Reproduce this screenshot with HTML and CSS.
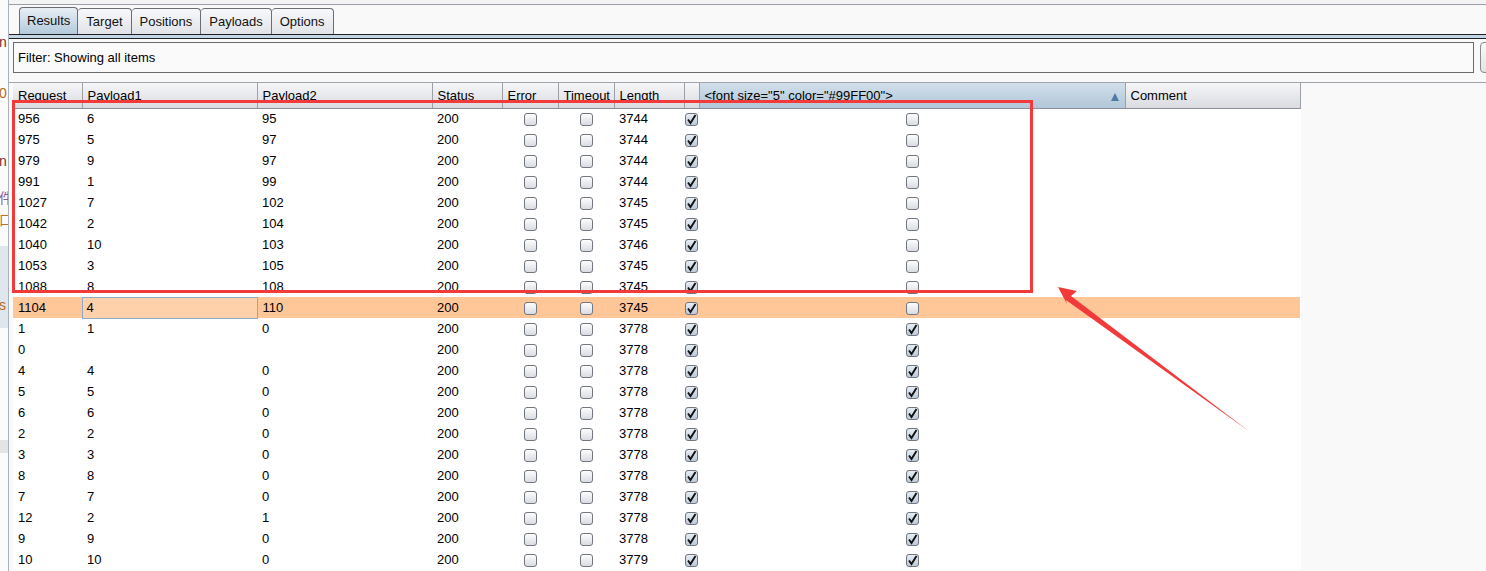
FILE: index.html
```html
<!DOCTYPE html>
<html lang="en">
<head>
  <meta charset="UTF-8">
  <title>Intruder Results</title>
  <link rel="stylesheet" href="styles.css">
</head>
<body>
  <div class="window">
    <aside class="behind">
      <span class="frag f1">n</span>
      <span class="frag f2">0,</span>
      <span class="frag f3">n</span>
      <span class="frag f4">件</span>
      <span class="frag f5">口</span>
      <span class="band"></span>
      <span class="frag f6">s</span>
      <span class="band gray"></span>
    </aside>

    <main class="panel">
      <div class="topline"></div>
      <nav class="tabs">
        <div class="tab active">Results</div>
        <div class="tab">Target</div>
        <div class="tab">Positions</div>
        <div class="tab">Payloads</div>
        <div class="tab">Options</div>
      </nav>
      <div class="tabrule"></div>

      <div class="filter-row">
        <div class="filter">Filter: Showing all items</div>
        <div class="filter-btn"></div>
      </div>
      <div class="sep"></div>

      <table class="results">
        <colgroup>
          <col style="width:69px"><col style="width:175px"><col style="width:175px">
          <col style="width:70px"><col style="width:56px"><col style="width:56px">
          <col style="width:70px"><col style="width:15px"><col style="width:426px">
          <col style="width:175px">
        </colgroup>
        <thead>
          <tr>
            <th>Request</th><th>Payload1</th><th>Payload2</th><th>Status</th>
            <th>Error</th><th>Timeout</th><th>Length</th><th></th>
            <th class="sorted">&lt;font size="5" color="#99FF00"&gt;<span class="arrow-up"></span></th>
            <th>Comment</th>
          </tr>
        </thead>
        <tbody id="rows"></tbody>
      </table>
    </main>

    <!-- annotation drawn over the screenshot -->
    <div class="mark-box"></div>
    <svg class="mark-arrow" width="1486" height="571" viewBox="0 0 1486 571">
      <polygon points="1058,287 1077,291 1071,296 1250,432 1066,300 1067,304" fill="#f23a3a"/>
    </svg>
  </div>

  <script>
    const data = [
      [956, 6, 95, 3744, 0],
      [975, 5, 97, 3744, 0],
      [979, 9, 97, 3744, 0],
      [991, 1, 99, 3744, 0],
      [1027, 7, 102, 3745, 0],
      [1042, 2, 104, 3745, 0],
      [1040, 10, 103, 3746, 0],
      [1053, 3, 105, 3745, 0],
      [1088, 8, 108, 3745, 0],
      [1104, 4, 110, 3745, 0],
      [1, 1, 0, 3778, 1],
      [0, "", "", 3778, 1],
      [4, 4, 0, 3778, 1],
      [5, 5, 0, 3778, 1],
      [6, 6, 0, 3778, 1],
      [2, 2, 0, 3778, 1],
      [3, 3, 0, 3778, 1],
      [8, 8, 0, 3778, 1],
      [7, 7, 0, 3778, 1],
      [12, 2, 1, 3778, 1],
      [9, 9, 0, 3778, 1],
      [10, 10, 0, 3779, 1]
    ];

    function box(checked) {
      if (!checked) return '<span class="cb"></span>';
      return '<span class="cb on"><svg width="11" height="11" viewBox="0 0 11 11">' +
        '<path d="M2 5.5 L4.5 9 L9.5 1" fill="none" stroke="#111" stroke-width="1.9"/></svg></span>';
    }

    const tbody = document.getElementById("rows");
    let html = "";
    data.forEach(function(r) {
      const sel = r[0] === 1104;
      html += `<tr${sel ? ' class="selected"' : ''}>
        <td>${r[0]}</td>
        <td${sel ? ' class="focus"' : ''}>${r[1]}</td>
        <td>${r[2]}</td>
        <td>200</td>
        <td class="c">${box(false)}</td>
        <td class="c">${box(false)}</td>
        <td>${r[3]}</td>
        <td class="c">${box(true)}</td>
        <td class="c">${box(r[4])}</td>
        <td></td>
      </tr>`;
    });
    tbody.innerHTML = html;
  </script>
</body>
</html>
```

FILE: styles.css
```css
body {
  margin: 0;
  font-family: "Liberation Sans", Arial, sans-serif;
  font-size: 13px;
  color: #000;
  background: #f9f9f9;
  overflow: hidden;
}

.window {
  position: relative;
  display: flex;
  width: 1486px;
  height: 571px;
  overflow: hidden;
}

/* the window behind, cut off at the left */
.behind {
  position: relative;
  width: 8px;
  flex: none;
  background: #fbfbfb;
  border-right: 1px solid #a9b1bd;
  overflow: hidden;
}

.frag {
  position: absolute;
  left: -1px;
  font-size: 14px;
  color: #8a2a2a;
}
.f1 { top: 34px; }
.f2 { top: 85px; color: #b46a1a; }
.f3 { top: 153px; }
.f4 { top: 187px; color: #8a5a9a; font-family: "Noto Sans CJK SC", sans-serif; }
.f5 { top: 209px; color: #c07020; font-family: "Noto Sans CJK SC", sans-serif; }
.f6 { top: 297px; color: #b46a1a; }

.band {
  position: absolute;
  left: 0;
  top: 246px;
  width: 8px;
  height: 82px;
  background: #dfe6ee;
}
.band.gray {
  top: 440px;
  height: 13px;
  background: #e4e4e4;
}

.panel {
  flex: 1;
  display: flex;
  flex-direction: column;
  background: #f9f9f9;
}

.topline {
  height: 4px;
  border-bottom: 1px solid #9a9ea6;
  background: #f4f4f4;
}

.tabs {
  display: flex;
  padding: 2px 0 0 10px;
  height: 27px;
  align-items: flex-end;
}

.tab {
  height: 25px;
  line-height: 25px;
  padding: 0 8px;
  border: 1px solid #6a6d73;
  border-bottom: none;
  border-left: none;
  border-radius: 4px 4px 0 0;
  background: linear-gradient(#f7f8fa, #e1e3e8);
  color: #111;
}
.tab:first-child {
  border-left: 1px solid #6a6d73;
}
.tab.active {
  height: 26px;
  padding: 0 7px;
  background: linear-gradient(#e8eef4, #b3cadd);
}

.tabrule {
  height: 3px;
  border-top: 1px solid #202020;
  border-bottom: 1px solid #202020;
  background: #c3d6e6;
}

.filter-row {
  display: flex;
  gap: 6px;
  padding: 3px 0 0 4px;
  height: 31px;
}

.filter {
  width: 1455px;
  height: 29px;
  line-height: 29px;
  padding-left: 4px;
  border: 1px solid #6c6c6c;
  background: #fafafa;
  flex: none;
}

.filter-btn {
  width: 20px;
  height: 29px;
  border: 1px solid #8a8a8a;
  border-radius: 4px;
  background: linear-gradient(#fafafa, #e2e2e2);
  flex: none;
}

.sep {
  height: 9px;
  border-bottom: 1px solid #a0a4ac;
}

.results {
  margin-left: 4px;
  width: 1287px;
  table-layout: fixed;
  border-collapse: collapse;
  background: #fff;
}

.results th {
  height: 25px;
  padding: 1px 0 0 5px;
  text-align: left;
  font-weight: normal;
  white-space: nowrap;
  overflow: hidden;
  border-right: 1px solid #9ea0a8;
  border-bottom: 1px solid #8e9098;
  background: linear-gradient(#f6f6f8, #e6e7eb 55%, #dadbe0);
  box-sizing: border-box;
}

.results th.sorted {
  position: relative;
  background: linear-gradient(#d2dfea, #bfd1e0 55%, #b2c7d9);
}

.arrow-up {
  position: absolute;
  right: 6px;
  top: 10px;
  width: 0;
  height: 0;
  border-left: 4px solid transparent;
  border-right: 4px solid transparent;
  border-bottom: 8px solid #4d7aa6;
}

.results td {
  height: 21px;
  padding: 0 0 0 5px;
  white-space: nowrap;
  overflow: hidden;
  box-sizing: border-box;
}

.results td.c {
  padding: 0;
  text-align: center;
}

.results tr.selected td {
  background: #ffc697;
}

.results tr.selected td.focus {
  border: 1px solid #8fa9c6;
  background: #ffd1aa;
  padding-left: 4px;
}

.cb {
  display: inline-block;
  width: 13px;
  height: 13px;
  border: 1px solid #72767e;
  border-radius: 3px;
  background: linear-gradient(#fdfdfd, #d9dce2);
  vertical-align: middle;
  box-sizing: border-box;
  position: relative;
}

.cb.on {
  background: linear-gradient(#e6edf4, #bccadb);
}

.cb svg {
  position: absolute;
  left: 0;
  top: 0;
}

/* annotation */
.mark-box {
  position: absolute;
  left: 12px;
  top: 100px;
  width: 1015px;
  height: 187px;
  border: 3px solid #f23a3a;
  pointer-events: none;
}

.mark-arrow {
  position: absolute;
  left: 0;
  top: 0;
  pointer-events: none;
}
```
